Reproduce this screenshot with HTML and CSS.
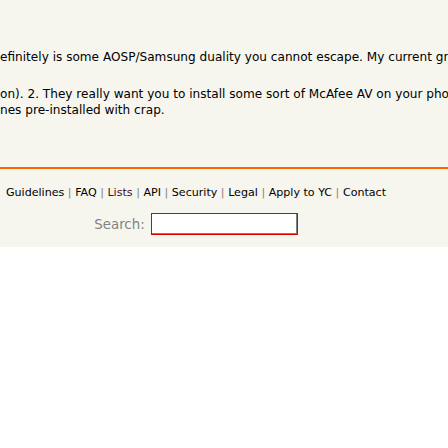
FILE: index.html
```html
<!DOCTYPE html>
<html>
<head>
<meta charset="utf-8">
<link rel="stylesheet" href="styles.css">
</head>
<body>
<div class="page">
  <div class="comment">
    <p class="line first">efinitely is some AOSP/Samsung duality you cannot escape. My current grip with Samsung phones</p>
    <p class="para">
      <span class="line">on). 2. They really want you to install some sort of McAfee AV on your phone, and it</span>
      <span class="line">nes pre-installed with crap.</span>
    </p>
  </div>
  <div class="rule"></div>
  <div class="footer">
    <div class="yclinks">
      <a href="#">Guidelines</a> | <a href="#">FAQ</a> | <a href="#" class="visited">Lists</a> | <a href="#">API</a> | <a href="#">Security</a> | <a href="#">Legal</a> | <a href="#">Apply to YC</a> | <a href="#">Contact</a>
    </div>
    <form class="search">
      <label class="search-label">Search:</label>
      <input class="search-input" type="text">
    </form>
  </div>
</div>
</body>
</html>
```
FILE: styles.css
```css
html, body {
  margin: 0;
  padding: 0;
  background: #ffffff;
  overflow: hidden;
}
.page {
  background: #f6f6ef;
  width: 448px;
  height: 247px;
  overflow: hidden;
  font-family: "DejaVu Sans", Verdana, sans-serif;
}
.comment {
  padding-top: 49px;
  font-size: 12.1px;
  line-height: 16px;
  color: #000000;
}
.comment p {
  margin: 0;
  white-space: nowrap;
}
.line {
  display: block;
  white-space: nowrap;
}
.para {
  margin-top: 21px !important;
}
.rule {
  margin-top: 49px;
  height: 2px;
  background: #ff6600;
}
.footer {
  width: 392px;
  text-align: center;
}
.yclinks {
  margin-top: 17px;
  font-size: 11.1px;
  line-height: 14px;
  color: #828282;
}
.yclinks a {
  color: #000000;
  text-decoration: none;
}
.yclinks a.visited {
  color: #400a30;
}
.search {
  margin: 13px 0 0;
  display: flex;
  justify-content: center;
  align-items: center;
  gap: 6px;
}
.search-label {
  font-size: 13.33px;
  color: #828282;
}
.search-input {
  box-sizing: border-box;
  width: 147px;
  height: 22px;
  margin: 0;
  padding: 0;
  border: 1px solid #e00000;
  background: #ffffff;
  box-shadow: inset -1px -1px 0 #808080;
  outline: none;
}
```
